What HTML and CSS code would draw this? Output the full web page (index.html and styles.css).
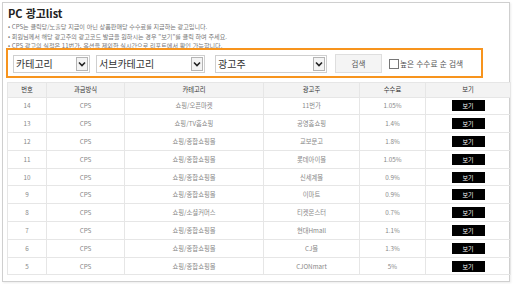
FILE: index.html
```html
<!DOCTYPE html>
<html lang="ko">
<head>
    <meta charset="UTF-8">
    <title>PC 광고list</title>
    <link rel="stylesheet" href="styles.css">
</head>
<body>
    <div class="panel">
        <h1 class="title">PC 광고list</h1>
        <ul class="notes">
            <li>• CPS는 클릭당/노출당 지급이 아닌 상품판매당 수수료를 지급하는 광고입니다.</li>
            <li>• 회원님께서 해당 광고주의 광고코드 발급을 원하시는 경우 "보기"를 클릭 하여 주세요.</li>
            <li>• CPS 광고의 실적은 11번가, 옥션을 제외한 실시간으로 리포트에서 확인 가능합니다.</li>
        </ul>
        <div class="filter">
            <div class="select sel-cat">
                <span>카테고리</span>
                <span class="arrow"><svg width="8" height="6" viewBox="0 0 8 6"><path d="M1 1.5 L4 4.5 L7 1.5" fill="none" stroke="#222" stroke-width="1.6"/></svg></span>
            </div>
            <div class="select sel-sub">
                <span>서브카테고리</span>
                <span class="arrow"><svg width="8" height="6" viewBox="0 0 8 6"><path d="M1 1.5 L4 4.5 L7 1.5" fill="none" stroke="#222" stroke-width="1.6"/></svg></span>
            </div>
            <div class="select sel-adv">
                <span>광고주</span>
                <span class="arrow"><svg width="8" height="6" viewBox="0 0 8 6"><path d="M1 1.5 L4 4.5 L7 1.5" fill="none" stroke="#222" stroke-width="1.6"/></svg></span>
            </div>
            <button class="search-btn">검색</button>
            <label class="sort"><span class="check"></span>높은 수수료 순 검색</label>
        </div>
        <table class="ad-table">
            <thead>
                <tr>
                    <th class="c-no">번호</th>
                    <th class="c-type">과금방식</th>
                    <th class="c-cat">카테고리</th>
                    <th class="c-adv">광고주</th>
                    <th class="c-fee">수수료</th>
                    <th class="c-view">보기</th>
                </tr>
            </thead>
            <tbody>
                <tr><td>14</td><td>CPS</td><td>쇼핑/오픈마켓</td><td>11번가</td><td>1.05%</td><td><span class="view-btn">보기</span></td></tr>
                <tr><td>13</td><td>CPS</td><td>쇼핑/TV홈쇼핑</td><td>공영홈쇼핑</td><td>1.4%</td><td><span class="view-btn">보기</span></td></tr>
                <tr><td>12</td><td>CPS</td><td>쇼핑/종합쇼핑몰</td><td>교보문고</td><td>1.8%</td><td><span class="view-btn">보기</span></td></tr>
                <tr><td>11</td><td>CPS</td><td>쇼핑/종합쇼핑몰</td><td>롯데아이몰</td><td>1.05%</td><td><span class="view-btn">보기</span></td></tr>
                <tr><td>10</td><td>CPS</td><td>쇼핑/종합쇼핑몰</td><td>신세계몰</td><td>0.9%</td><td><span class="view-btn">보기</span></td></tr>
                <tr><td>9</td><td>CPS</td><td>쇼핑/종합쇼핑몰</td><td>이마트</td><td>0.9%</td><td><span class="view-btn">보기</span></td></tr>
                <tr><td>8</td><td>CPS</td><td>쇼핑/소셜커머스</td><td>티켓몬스터</td><td>0.7%</td><td><span class="view-btn">보기</span></td></tr>
                <tr><td>7</td><td>CPS</td><td>쇼핑/종합쇼핑몰</td><td>현대Hmall</td><td>1.1%</td><td><span class="view-btn">보기</span></td></tr>
                <tr><td>6</td><td>CPS</td><td>쇼핑/종합쇼핑몰</td><td>CJ몰</td><td>1.3%</td><td><span class="view-btn">보기</span></td></tr>
                <tr><td>5</td><td>CPS</td><td>쇼핑/종합쇼핑몰</td><td>CJONmart</td><td>5%</td><td><span class="view-btn">보기</span></td></tr>
            </tbody>
        </table>
    </div>
</body>
</html>
```

FILE: styles.css
```css
body {
    margin: 0;
    padding: 2px;
    background-color: #fff;
    font-family: "Noto Sans CJK KR", "Noto Sans", sans-serif;
    color: #333;
}
.panel {
    width: 508px;
    height: 280px;
    border: 1px solid #cfcfcf;
    padding: 4px 0 0 4px;
    box-sizing: border-box;
    box-shadow: 1px 1px 2px rgba(0,0,0,0.08);
}
.title {
    font-size: 11px;
    line-height: 13px;
    font-weight: bold;
    margin: 0 0 0 1px;
    color: #222;
}
.notes {
    list-style: none;
    margin: 2px 0 0 1px;
    padding: 0;
    font-size: 6.1px;
    line-height: 9.5px;
    color: #777;
}
.filter {
    position: relative;
    margin: -2.5px 0 0 -1px;
    width: 477px;
    height: 30px;
    border: 2px solid #f7941d;
    box-sizing: border-box;
    background-color: #fff;
    display: flex;
    align-items: center;
    padding: 1px 0 0 5px;
}
.select {
    height: 18px;
    border: 1px solid #cfcfcf;
    box-sizing: border-box;
    display: flex;
    align-items: center;
    justify-content: space-between;
    font-size: 10px;
    color: #333;
    padding: 0 1px 0 2px;
}
.sel-cat { width: 77px; }
.sel-sub { width: 109px; margin-left: 6px; }
.sel-adv { width: 112px; margin-left: 10px; }
.arrow {
    width: 12px;
    height: 14px;
    border: 1px solid #b5b5b5;
    box-sizing: border-box;
    background-color: #f4f4f4;
    display: flex;
    align-items: center;
    justify-content: center;
}
.search-btn {
    width: 47px;
    height: 19px;
    margin-left: 8px;
    border: 1px solid #dedede;
    background-color: #f4f4f4;
    font-family: inherit;
    font-size: 7.5px;
    color: #555;
    padding: 0;
}
.sort {
    display: flex;
    align-items: center;
    margin-left: 7px;
    font-size: 7.7px;
    color: #555;
}
.check {
    width: 8px;
    height: 8px;
    border: 1px solid #777;
    background-color: #fff;
    margin-right: 1px;
}
.ad-table {
    margin-top: 3.5px;
    width: 504px;
    border-collapse: collapse;
    table-layout: fixed;
    font-size: 6.3px;
}
.ad-table th, .ad-table td {
    border: 1px solid #e6e6e6;
    text-align: center;
    padding: 0;
}
.ad-table th {
    height: 14px;
    background-color: #f3f3f3;
    color: #333;
    font-weight: normal;
}
.ad-table td {
    height: 16.8px;
    color: #888;
}
.c-no { width: 38px; }
.c-type { width: 77px; }
.c-cat { width: 138px; }
.c-adv { width: 95px; }
.c-fee { width: 65px; }
.view-btn {
    display: inline-block;
    width: 33px;
    height: 11px;
    line-height: 11px;
    background-color: #000;
    color: #fff;
    font-size: 6px;
    vertical-align: middle;
}
```
